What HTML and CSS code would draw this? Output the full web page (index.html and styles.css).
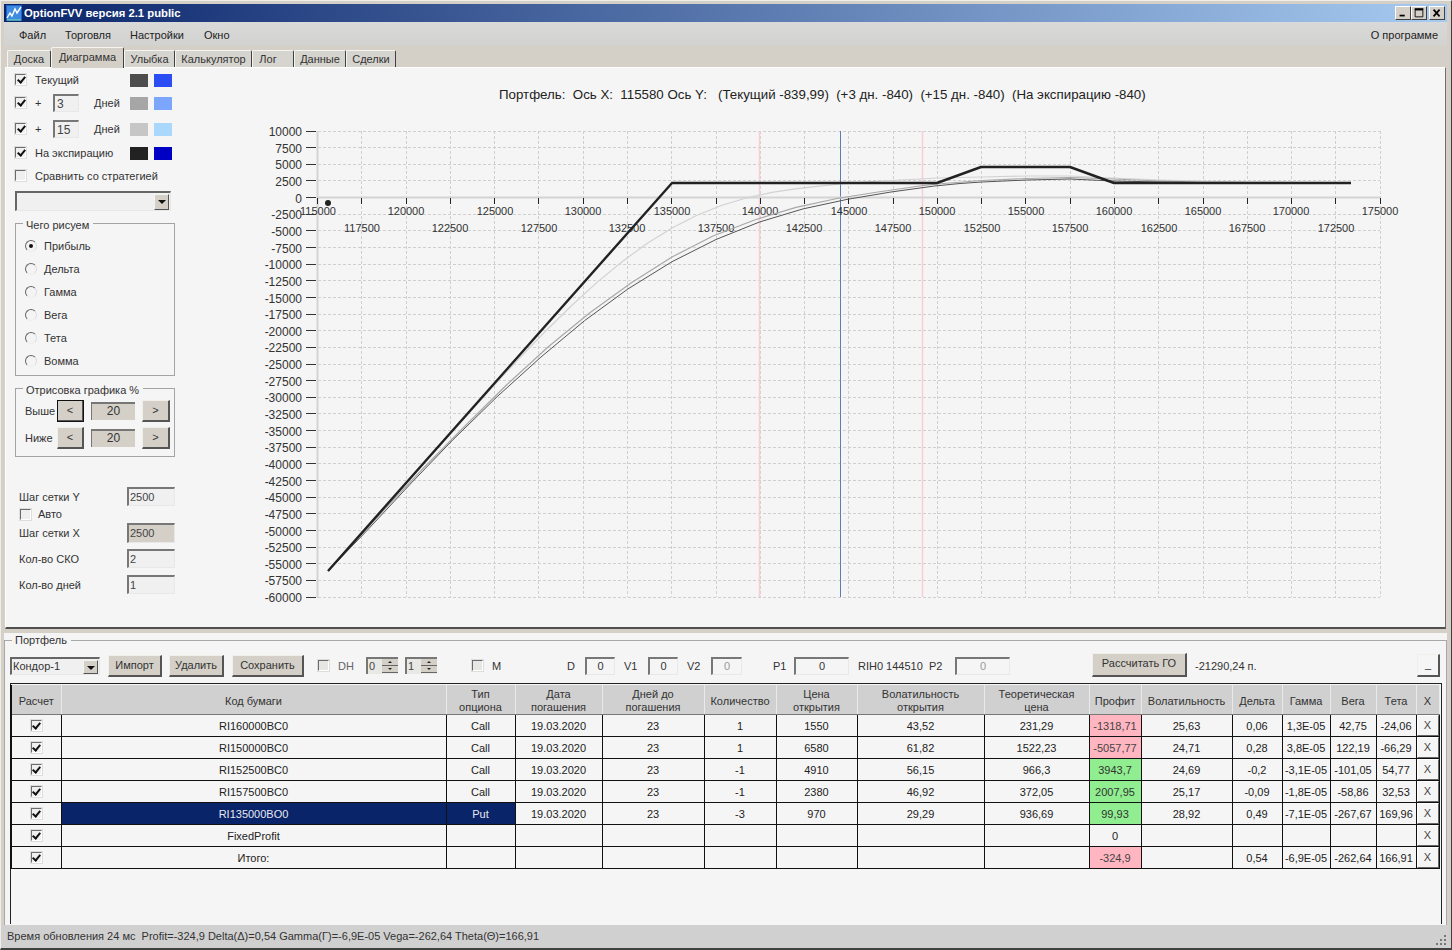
FILE: index.html
```html
<!DOCTYPE html>
<html lang="ru">
<head>
<meta charset="utf-8">
<title>OptionFVV</title>
<link rel="stylesheet" href="styles.css">
</head>
<body>
<div class="win">
  <div class="titlebar">
    <svg class="appicon" viewBox="0 0 16 16"><rect width="16" height="16" fill="#1c62c8"/><rect x="1" y="1" width="14" height="14" fill="#3f8be0"/><path d="M1 13 L4 8 L6 11 L9 4 L11 8 L15 2" fill="none" stroke="#fff" stroke-width="1.4"/><path d="M1 15 H15" stroke="#7fe0a0"/></svg>
    <span class="apptitle">OptionFVV версия 2.1 public</span>
    <div class="wbtns">
      <span class="wbtn"><svg viewBox="0 0 16 14"><rect x="4" y="9" width="6" height="2" fill="#000"/></svg></span>
      <span class="wbtn"><svg viewBox="0 0 16 14"><path d="M3.5 3.5H12.5V11.5H3.5Z M3 2.5H13" fill="none" stroke="#000"/><path d="M3 2.5H13" stroke="#000" stroke-width="2"/></svg></span>
      <span class="wbtn wbtn-close"><svg viewBox="0 0 16 14"><path d="M4 3L11 11M11 3L4 11" stroke="#000" stroke-width="2" fill="none"/></svg></span>
    </div>
  </div>
  <div class="menubar">
    <span class="menu-item m-file">Файл</span>
    <span class="menu-item m-trade">Торговля</span>
    <span class="menu-item m-set">Настройки</span>
    <span class="menu-item m-win">Окно</span>
    <span class="menu-about">О программе</span>
  </div>
  <div class="tabs">
    <span class="tab t1">Доска</span>
    <span class="tab tab-active t2">Диаграмма</span>
    <span class="tab t3">Улыбка</span>
    <span class="tab t4">Калькулятор</span>
    <span class="tab t5">Лог</span>
    <span class="tab t6">Данные</span>
    <span class="tab t7">Сделки</span>
  </div>

  <div class="main">
    <aside class="side">
      <div class="row r-first">
        <span class="cb on"></span><span class="lab lab-w">Текущий</span>
        <span class="sw sw-a1"></span><span class="sw sw-b1"></span>
      </div>
      <div class="row r-days mt6">
        <span class="cb on"></span><span class="lab plus">+</span><span class="inp inp-day">3</span><span class="lab dn">Дней</span>
        <span class="sw sw-a2"></span><span class="sw sw-b2"></span>
      </div>
      <div class="row r-days mt8">
        <span class="cb on"></span><span class="lab plus">+</span><span class="inp inp-day">15</span><span class="lab dn">Дней</span>
        <span class="sw sw-a3"></span><span class="sw sw-b3"></span>
      </div>
      <div class="row mt7">
        <span class="cb on"></span><span class="lab lab-w">На экспирацию</span>
        <span class="sw sw-a4"></span><span class="sw sw-b4"></span>
      </div>
      <div class="row mt7">
        <span class="cb"></span><span class="lab">Сравнить со стратегией</span>
      </div>
      <div class="combo combo-side"><span class="combo-val"></span><span class="combo-btn"></span></div>

      <div class="group g-draw">
        <span class="legend">Чего рисуем</span>
        <div class="radio-row"><span class="rd on"></span>Прибыль</div>
        <div class="radio-row"><span class="rd"></span>Дельта</div>
        <div class="radio-row"><span class="rd"></span>Гамма</div>
        <div class="radio-row"><span class="rd"></span>Вега</div>
        <div class="radio-row"><span class="rd"></span>Тета</div>
        <div class="radio-row"><span class="rd"></span>Вомма</div>
      </div>

      <div class="group g-pct">
        <span class="legend">Отрисовка графика %</span>
        <div class="pct-row">
          <span class="pct-lab">Выше</span><span class="btn pct-l focus">&lt;</span><span class="pct-val">20</span><span class="btn pct-r">&gt;</span>
        </div>
        <div class="pct-row pct-row2">
          <span class="pct-lab">Ниже</span><span class="btn pct-l">&lt;</span><span class="pct-val">20</span><span class="btn pct-r">&gt;</span>
        </div>
      </div>

      <div class="fld f-y"><span class="fld-lab">Шаг сетки Y</span><span class="inp inp-f">2500</span></div>
      <div class="auto"><span class="cb"></span><span class="auto-lab">Авто</span></div>
      <div class="fld f-x"><span class="fld-lab">Шаг сетки X</span><span class="inp inp-f inp-dis">2500</span></div>
      <div class="fld f-s"><span class="fld-lab">Кол-во СКО</span><span class="inp inp-f">2</span></div>
      <div class="fld f-d"><span class="fld-lab">Кол-во дней</span><span class="inp inp-f">1</span></div>
    </aside>

    <svg class="chart" width="1256" height="560" viewBox="190 68 1256 560">
      <text class="ctitle" x="499" y="99">Портфель:  Ось X:  115580 Ось Y:   (Текущий -839,99)  (+3 дн. -840)  (+15 дн. -840)  (На экспирацию -840)</text>
      <path class="grid" d="M318 131.5H1380M318 147.5H1380M318 164.5H1380M318 180.5H1380M318 214.5H1380M318 230.5H1380M318 247.5H1380M318 264.5H1380M318 280.5H1380M318 297.5H1380M318 314.5H1380M318 330.5H1380M318 347.5H1380M318 364.5H1380M318 380.5H1380M318 397.5H1380M318 413.5H1380M318 430.5H1380M318 447.5H1380M318 463.5H1380M318 480.5H1380M318 497.5H1380M318 513.5H1380M318 530.5H1380M318 547.5H1380M318 563.5H1380M318 580.5H1380M318 597.5H1380"/>
      <path class="grid" d="M361.5 131V597M406.5 131V597M450.5 131V597M494.5 131V597M538.5 131V597M583.5 131V597M627.5 131V597M671.5 131V597M716.5 131V597M760.5 131V597M804.5 131V597M848.5 131V597M893.5 131V597M937.5 131V597M981.5 131V597M1025.5 131V597M1070.5 131V597M1114.5 131V597M1158.5 131V597M1203.5 131V597M1247.5 131V597M1291.5 131V597M1335.5 131V597M1380.5 131V597"/>
      <path class="pink" d="M759.5 131V597M922.5 131V597"/>
      <path class="blue" d="M840.5 131V597"/>
      <path class="axis" d="M317.5 131V598M317 197.5H1381"/>
      <path class="ytick" d="M306 131.5H316M306 147.5H316M306 164.5H316M306 180.5H316M306 197.5H316M306 214.5H316M306 230.5H316M306 247.5H316M306 264.5H316M306 280.5H316M306 297.5H316M306 314.5H316M306 330.5H316M306 347.5H316M306 364.5H316M306 380.5H316M306 397.5H316M306 413.5H316M306 430.5H316M306 447.5H316M306 463.5H316M306 480.5H316M306 497.5H316M306 513.5H316M306 530.5H316M306 547.5H316M306 563.5H316M306 580.5H316M306 597.5H316"/>
      <path class="xtick" d="M317.5 198V204M361.5 198V204M406.5 198V204M450.5 198V204M494.5 198V204M538.5 198V204M583.5 198V204M627.5 198V204M671.5 198V204M716.5 198V204M760.5 198V204M804.5 198V204M848.5 198V204M893.5 198V204M937.5 198V204M981.5 198V204M1025.5 198V204M1070.5 198V204M1114.5 198V204M1158.5 198V204M1203.5 198V204M1247.5 198V204M1291.5 198V204M1335.5 198V204M1380.5 198V204"/>

      <g class="ylab">
        <text x="302" y="136">10000</text><text x="302" y="153">7500</text><text x="302" y="169">5000</text><text x="302" y="186">2500</text><text x="302" y="203">0</text>
        <text x="302" y="219">-2500</text><text x="302" y="236">-5000</text><text x="302" y="253">-7500</text><text x="302" y="269">-10000</text><text x="302" y="286">-12500</text>
        <text x="302" y="303">-15000</text><text x="302" y="319">-17500</text><text x="302" y="336">-20000</text><text x="302" y="352">-22500</text><text x="302" y="369">-25000</text>
        <text x="302" y="386">-27500</text><text x="302" y="402">-30000</text><text x="302" y="419">-32500</text><text x="302" y="436">-35000</text><text x="302" y="452">-37500</text>
        <text x="302" y="469">-40000</text><text x="302" y="486">-42500</text><text x="302" y="502">-45000</text><text x="302" y="519">-47500</text><text x="302" y="536">-50000</text>
        <text x="302" y="552">-52500</text><text x="302" y="569">-55000</text><text x="302" y="585">-57500</text><text x="302" y="602">-60000</text>
      </g>
      <g class="xlab">
        <text x="318" y="215">115000</text><text x="406" y="215">120000</text><text x="495" y="215">125000</text><text x="583" y="215">130000</text><text x="672" y="215">135000</text><text x="760" y="215">140000</text><text x="849" y="215">145000</text><text x="937" y="215">150000</text><text x="1026" y="215">155000</text><text x="1114" y="215">160000</text><text x="1203" y="215">165000</text><text x="1291" y="215">170000</text><text x="1380" y="215">175000</text>
        <text x="362" y="232">117500</text><text x="450" y="232">122500</text><text x="539" y="232">127500</text><text x="627" y="232">132500</text><text x="716" y="232">137500</text><text x="804" y="232">142500</text><text x="893" y="232">147500</text><text x="982" y="232">152500</text><text x="1070" y="232">157500</text><text x="1159" y="232">162500</text><text x="1247" y="232">167500</text><text x="1336" y="232">172500</text>
      </g>

      <polyline class="c-light" points="328,571 422,465 447,437 472,409.6 497,382 522,355.5 547,329.7 572,305.2 597,282.4 622,261.7 647,243.5 672,228 697,215.3 722,205.3 747,197.8 772,192.4 797,188.7 822,185.8 840,184 880,181 920,179 937,178 982,177 1027,176 1070,176 1113,178 1160,180 1200,181 1250,182 1350,183"/>
      <polyline class="c-mid" points="328,571 383,511 424.5,467 466,425 507,384.5 548,347 589.5,313 631,283 672,257 713,236 754.5,220 796,207.4 837,198.5 878,192 919.5,186 937,184 982,180.5 1027,178.5 1070,177.5 1113,179 1160,181 1200,182 1250,182.5 1350,183"/>
      <polyline class="c-dark" points="328,571 366,531.6 409.5,484.9 453,439.7 497,396.8 541,357 584.5,320.7 628,288.9 672,261.7 716,239.5 759.5,222 803,208.9 847,199.4 891,192 934.5,186 960,183.5 982,182 1027,180 1070,179 1113,181 1160,182 1200,182.5 1250,183 1350,183"/>
      <polyline class="c-exp" points="328,571 672,183 937,183 981,167 1070,167 1114,183 1351,183"/>
      <circle class="dot" cx="328" cy="203" r="3"/>
    </svg>
  </div>

  <div class="portfolio">
    <div class="pgroup">
      <span class="legend legend-p">Портфель</span>
      <div class="toolbar">
        <div class="combo combo-port"><span class="combo-val">Кондор-1</span><span class="combo-btn"></span></div>
        <span class="btn tb-btn tb-imp">Импорт</span>
        <span class="btn tb-btn tb-del">Удалить</span>
        <span class="btn tb-btn tb-save">Сохранить</span>
        <span class="cb cb-dis tb-dh"></span><span class="tb-txt tb-dhl">DH</span>
        <span class="spin tb-s1"><span class="spin-val">0</span><span class="spin-btns"><span class="spin-up"></span><span class="spin-dn"></span></span></span>
        <span class="spin tb-s2"><span class="spin-val">1</span><span class="spin-btns"><span class="spin-up"></span><span class="spin-dn"></span></span></span>
        <span class="cb cb-dis tb-m"></span><span class="tb-txt tb-ml">M</span>
        <span class="tb-txt tb-d">D</span><span class="inp tb-inp tb-i1">0</span>
        <span class="tb-txt tb-v1">V1</span><span class="inp tb-inp tb-i2">0</span>
        <span class="tb-txt tb-v2">V2</span><span class="inp tb-inp tb-i3 tb-off">0</span>
        <span class="tb-txt tb-p1">P1</span><span class="inp tb-inp tb-i4">0</span>
        <span class="tb-txt tb-ric">RIH0 144510</span><span class="tb-txt tb-p2">P2</span><span class="inp tb-inp tb-i5 tb-off">0</span>
        <span class="btn tb-btn tb-go">Рассчитать ГО</span>
        <span class="tb-txt tb-res">-21290,24 п.</span>
        <span class="btn tb-min">_</span>
      </div>
      <div class="gridbox">
        <table class="tbl">
          <colgroup>
            <col class="c1"><col class="c2"><col class="c3"><col class="c4"><col class="c5"><col class="c6"><col class="c7"><col class="c8"><col class="c9"><col class="c10"><col class="c11"><col class="c12"><col class="c13"><col class="c14"><col class="c15"><col class="c16">
          </colgroup>
          <thead>
            <tr><th>Расчет</th><th>Код бумаги</th><th>Тип<br>опциона</th><th>Дата<br>погашения</th><th>Дней до<br>погашения</th><th>Количество</th><th>Цена<br>открытия</th><th>Волатильность<br>открытия</th><th>Теоретическая<br>цена</th><th>Профит</th><th>Волатильность</th><th>Дельта</th><th>Гамма</th><th>Вега</th><th>Тета</th><th>X</th></tr>
          </thead>
          <tbody>
            <tr><td><span class="cb on cb-c"></span></td><td>RI160000BC0</td><td>Call</td><td>19.03.2020</td><td>23</td><td>1</td><td>1550</td><td>43,52</td><td>231,29</td><td class="neg">-1318,71</td><td>25,63</td><td>0,06</td><td>1,3E-05</td><td>42,75</td><td>-24,06</td><td class="xcell"><span class="xbtn">X</span></td></tr>
            <tr><td><span class="cb on cb-c"></span></td><td>RI150000BC0</td><td>Call</td><td>19.03.2020</td><td>23</td><td>1</td><td>6580</td><td>61,82</td><td>1522,23</td><td class="neg">-5057,77</td><td>24,71</td><td>0,28</td><td>3,8E-05</td><td>122,19</td><td>-66,29</td><td class="xcell"><span class="xbtn">X</span></td></tr>
            <tr><td><span class="cb on cb-c"></span></td><td>RI152500BC0</td><td>Call</td><td>19.03.2020</td><td>23</td><td>-1</td><td>4910</td><td>56,15</td><td>966,3</td><td class="pos">3943,7</td><td>24,69</td><td>-0,2</td><td>-3,1E-05</td><td>-101,05</td><td>54,77</td><td class="xcell"><span class="xbtn">X</span></td></tr>
            <tr><td><span class="cb on cb-c"></span></td><td>RI157500BC0</td><td>Call</td><td>19.03.2020</td><td>23</td><td>-1</td><td>2380</td><td>46,92</td><td>372,05</td><td class="pos">2007,95</td><td>25,17</td><td>-0,09</td><td>-1,8E-05</td><td>-58,86</td><td>32,53</td><td class="xcell"><span class="xbtn">X</span></td></tr>
            <tr><td><span class="cb on cb-c"></span></td><td class="sel">RI135000BO0</td><td class="sel">Put</td><td>19.03.2020</td><td>23</td><td>-3</td><td>970</td><td>29,29</td><td>936,69</td><td class="pos">99,93</td><td>28,92</td><td>0,49</td><td>-7,1E-05</td><td>-267,67</td><td>169,96</td><td class="xcell"><span class="xbtn">X</span></td></tr>
            <tr><td><span class="cb on cb-c"></span></td><td>FixedProfit</td><td></td><td></td><td></td><td></td><td></td><td></td><td></td><td>0</td><td></td><td></td><td></td><td></td><td></td><td class="xcell"><span class="xbtn">X</span></td></tr>
            <tr><td><span class="cb on cb-c"></span></td><td>Итого:</td><td></td><td></td><td></td><td></td><td></td><td></td><td></td><td class="neg">-324,9</td><td></td><td>0,54</td><td>-6,9E-05</td><td>-262,64</td><td>166,91</td><td class="xcell"><span class="xbtn">X</span></td></tr>
          </tbody>
        </table>
      </div>
    </div>
  </div>

  <div class="status">
    <span>Время обновления 24 мс&nbsp;&nbsp;Profit=-324,9 Delta(Δ)=0,54 Gamma(Γ)=-6,9E-05 Vega=-262,64 Theta(Θ)=166,91</span>
    <svg class="grip" viewBox="0 0 12 12"><path d="M9 1h2v2H9zM5 5h2v2H5zM9 5h2v2H9zM1 9h2v2H1zM5 9h2v2H5zM9 9h2v2H9z" fill="#777"/></svg>
  </div>
</div>
</body>
</html>
```
FILE: styles.css
```css
* { box-sizing: border-box; }
html, body { margin: 0; padding: 0; }
body { font: 11px "Liberation Sans", Arial, sans-serif; color: #222; background: #d4d0c8; }

.win {
  width: 1452px; height: 950px; padding: 4px 4px 0 3px;
  display: flex; flex-direction: column;
  background: #d4d0c8;
  border-top: 1px solid #efeee8; border-left: 1px solid #efeee8;
  border-right: 1px solid #404040; border-bottom: 2px solid #404040;
  overflow: hidden;
}

/* title bar */
.titlebar {
  height: 18px; margin-top: -1px; flex: none;
  display: flex; align-items: center;
  background: linear-gradient(90deg, #0a246a, #a6caf0);
}
.appicon { width: 16px; height: 16px; margin-left: 2px; flex: none; }
.apptitle { margin-left: 2px; color: #fff; font: bold 11.3px "Liberation Sans", Arial, sans-serif; }
.wbtns { margin-left: auto; margin-right: 2px; display: flex; }
.wbtn {
  width: 16px; height: 14px; display: block; background: #d4d0c8;
  border-top: 1px solid #fff; border-left: 1px solid #fff;
  border-right: 1px solid #404040; border-bottom: 1px solid #404040;
}
.wbtn svg { display: block; width: 14px; height: 12px; }
.wbtn-close { margin-left: 2px; }

/* menu */
.menubar {
  height: 24px; flex: none; display: flex; align-items: center; padding-top: 2px;
  background: linear-gradient(180deg, #d9d9d9, #d2d2d0);
  color: #222;
}
.m-file { margin-left: 15px; }
.m-trade { margin-left: 19px; }
.m-set { margin-left: 19px; }
.m-win { margin-left: 20px; }
.menu-about { margin-left: auto; margin-right: 9px; }

/* tabs */
.tabs { height: 21px; flex: none; display: flex; align-items: flex-end; padding-left: 3px; background: #d4d0c8; }
.tab {
  height: 17px; line-height: 16px; text-align: center; display: block;
  background: #d6d4ce; color: #333;
  border-top: 1px solid #f4f4f0; border-left: 1px solid #f4f4f0; border-right: 1px solid #404040;
  border-top-left-radius: 2px; border-top-right-radius: 2px;
}
.tab-active { height: 21px; line-height: 19px; position: relative; top: 1px; background: #d4d0c8; padding-bottom: 1px; }
.t1 { width: 44px; }
.t2 { width: 73px; }
.t3 { width: 51px; }
.t4 { width: 77px; }
.t5 { width: 42px; padding-right: 10px; }
.t6 { width: 52px; }
.t7 { width: 50px; }

/* main panel */
.main {
  height: 562px; flex: none; display: flex; margin-left: 1px; margin-right: 1px;
  background: #f5f5f5;
  border-top: 1px solid #fff; border-left: 1px solid #fff;
  border-right: 1px solid #707070; border-bottom: 2px solid #505050;
}
.side { width: 184px; flex: none; padding: 4px 0 0 9px; display: flex; flex-direction: column; }
.chart { display: block; flex: none; }

.row { display: flex; align-items: center; height: 16px; position: relative; }
.row .cb { top: -1px; }
.r-days { height: 18px; }
.mt6 { margin-top: 6px; }
.mt7 { margin-top: 7px; }
.mt8 { margin-top: 8px; }
.lab { margin-left: 9px; color: #333; }
.lab-w { width: 95px; }
.plus { width: 9px; }
.dn { margin-left: 15px; width: 36px; }
.sw { width: 18px; height: 13px; display: block; flex: none; }
.sw + .sw { margin-left: 6px; }
.sw-a1 { background: #4d4d4d; } .sw-b1 { background: #2c4cf4; }
.sw-a2 { background: #a6a6a6; } .sw-b2 { background: #7ba6fb; }
.sw-a3 { background: #c6c6c6; } .sw-b3 { background: #aad8fd; }
.sw-a4 { background: #222; }    .sw-b4 { background: #0000c4; }

/* controls */
.cb {
  width: 11px; height: 11px; display: block; flex: none; position: relative; background: #efefef;
  border-top: 1px solid #6c6c6c; border-left: 1px solid #6c6c6c;
  border-right: 1px solid #fff; border-bottom: 1px solid #fff;
  box-shadow: 0 0 0 1px #ddd;
}
.cb.on::after {
  content: ""; position: absolute; left: 2.5px; top: 0; width: 3px; height: 6px;
  border-right: 2px solid #111; border-bottom: 2px solid #111; transform: rotate(40deg);
}
.cb-dis { background: #e6e6e2; }
.cb-c { margin: 0 auto; }
.inp {
  display: block; height: 18px; line-height: 16px; padding-left: 2px; background: #f0f0f0; color: #444; flex: none;
  border-top: 2px solid #777; border-left: 2px solid #777;
  border-right: 1px solid #e8e8e8; border-bottom: 1px solid #e8e8e8;
}
.inp-day { width: 26px; margin-left: 9px; font-size: 12px; }
.btn {
  display: block; text-align: center; background: #d4d0c8; color: #333; flex: none;
  border-top: 1px solid #f0efea; border-left: 1px solid #f0efea;
  border-right: 2px solid #555; border-bottom: 2px solid #555;
}
.combo { display: flex; background: #f0f0f0; flex: none; border-top: 2px solid #666; border-left: 2px solid #666; border-right: 1px solid #e8e8e8; border-bottom: 1px solid #e8e8e8; }
.combo-side { width: 156px; height: 20px; margin: 7px 0 0 0; }
.combo-val { flex: 1; line-height: 15px; padding-left: 1px; color: #333; }
.combo-btn {
  width: 15px; margin: 1px 1px 0 0; background: #d4d0c8; position: relative;
  border-top: 1px solid #f4f4f0; border-left: 1px solid #f4f4f0; border-right: 1px solid #555; border-bottom: 1px solid #555;
}
.combo-btn::after {
  content: ""; position: absolute; left: 3px; top: 5px;
  border-left: 4px solid transparent; border-right: 4px solid transparent; border-top: 4px solid #111;
}

.group { position: relative; width: 160px; border: 1px solid #a4a4a4; }
.legend { position: absolute; left: 7px; top: -5px; height: 14px; line-height: 13px; padding: 0 4px 0 3px; background: #f5f5f5; color: #333; white-space: nowrap; }
.g-draw { height: 153px; margin-top: 12px; padding: 10px 0 0 9px; }
.radio-row { height: 23px; display: flex; align-items: center; color: #333; }
.rd {
  width: 12px; height: 12px; border-radius: 50%; margin-right: 7px; position: relative; background: #f4f4f4; flex: none;
  border: 1px solid; border-color: #666 #ddd #eee #666;
}
.rd.on::after { content: ""; position: absolute; left: 3px; top: 3px; width: 4px; height: 4px; border-radius: 50%; background: #111; }
.g-pct { height: 69px; margin-top: 12px; padding: 11px 0 0 9px; }
.pct-row { display: flex; align-items: center; height: 22px; }
.pct-row2 { margin-top: 5px; }
.pct-lab { width: 32px; color: #333; }
.pct-l, .pct-r { height: 22px; line-height: 19px; }
.pct-l { width: 27px; }
.pct-r { width: 28px; }
.focus { outline: 1px solid #111; outline-offset: -1px; }
.pct-val {
  width: 44px; height: 18px; margin: 0 7px; line-height: 15px; text-align: center; background: #d4d0c8; font-size: 12px; color: #333;
  border-top: 2px solid #777; border-left: 1px solid #777;
}
.fld { display: flex; align-items: center; justify-content: space-between; width: 156px; margin-left: 4px; }
.fld-lab { color: #333; }
.inp-f { width: 48px; height: 19px; padding-left: 1px; }
.inp-dis { background: #d4d0c8; height: 20px; }
.f-y { margin-top: 30px; }
.auto { display: flex; align-items: center; height: 12px; margin: 2px 0 0 5px; }
.auto-lab { margin-left: 7px; color: #333; }
.f-x { margin-top: 3px; }
.f-s { margin-top: 6px; }
.f-d { margin-top: 7px; }

/* chart */
.ctitle { font: 13.3px "Liberation Sans", Arial, sans-serif; fill: #222; white-space: pre; }
.grid { fill: none; stroke: #cfcfcf; stroke-width: 1; stroke-dasharray: 3 2; }
.pink { fill: none; stroke: #f9cdd6; stroke-width: 1.5; }
.blue { fill: none; stroke: #5f7cae; stroke-width: 1; }
.axis { fill: none; stroke: #d4d4d4; stroke-width: 2; }
.ytick { fill: none; stroke: #333; stroke-width: 1; }
.xtick { fill: none; stroke: #222; stroke-width: 1; }
.ylab text { font: 12px "Liberation Sans", Arial, sans-serif; fill: #333; text-anchor: end; }
.xlab text { font: 11px "Liberation Sans", Arial, sans-serif; fill: #333; text-anchor: middle; }
.c-light, .c-mid, .c-dark, .c-exp { fill: none; stroke-linejoin: round; }
.c-light { stroke: #d2d2d2; stroke-width: 1.2; }
.c-mid { stroke: #a8a8a8; stroke-width: 1.2; }
.c-dark { stroke: #555; stroke-width: 1; }
.c-exp { stroke: #222; stroke-width: 2.4; }
.dot { fill: #222; }

/* portfolio */
.portfolio { height: 292px; flex: none; padding-top: 7px; margin-top: 4px; background: #f5f5f5; }
.pgroup {
  height: 100%; position: relative; padding-left: 5px;
  border-top: 1px solid #a8a8a8; border-left: 1px solid #a8a8a8; border-right: 1px solid #a8a8a8;
  display: flex; flex-direction: column;
}
.legend-p { left: 7px; top: -7px; background: #f5f5f5; }
.toolbar { height: 42px; padding-top: 7px; flex: none; display: flex; align-items: center; position: relative; }
.combo-port { width: 90px; height: 18px; }
.tb-btn { height: 22px; line-height: 19px; }
.tb-imp { width: 54px; margin-left: 8px; }
.tb-del { width: 55px; margin-left: 7px; }
.tb-save { width: 72px; margin-left: 8px; }
.tb-dh { margin-left: 14px; }
.tb-txt { color: #333; flex: none; white-space: nowrap; }
.tb-dhl { margin-left: 9px; width: 20px; color: #666; }
.spin { display: flex; width: 32px; height: 17px; margin-left: 8px; background: #e8e8e4; border-top: 2px solid #777; border-left: 2px solid #777; flex: none; }
.tb-s2 { margin-left: 7px; }
.spin-val { width: 14px; line-height: 14px; padding-left: 1px; color: #444; }
.spin-btns { display: flex; flex-direction: column; width: 16px; }
.spin-up, .spin-dn { display: block; height: 7px; position: relative; background: #d4d0c8; border-bottom: 1px solid #666; }
.spin-up::after, .spin-dn::after { content: ""; position: absolute; left: 6px; top: 2px; border-left: 2px solid transparent; border-right: 2px solid transparent; }
.spin-up::after { border-bottom: 2px solid #222; }
.spin-dn::after { border-top: 2px solid #222; }
.tb-m { margin-left: 35px; }
.tb-ml { margin-left: 9px; width: 11px; }
.tb-d { margin-left: 64px; width: 8px; }
.tb-inp { height: 18px; text-align: center; line-height: 15px; padding: 0; background: #f5f5f5; color: #333; }
.tb-i1 { width: 30px; margin-left: 10px; }
.tb-v1 { margin-left: 9px; width: 14px; }
.tb-i2 { width: 30px; margin-left: 10px; }
.tb-v2 { margin-left: 9px; width: 14px; }
.tb-i3 { width: 31px; margin-left: 10px; }
.tb-off { color: #999; }
.tb-p1 { margin-left: 31px; width: 13px; }
.tb-i4 { width: 55px; margin-left: 8px; }
.tb-ric { margin-left: 9px; width: 65px; }
.tb-p2 { margin-left: 6px; width: 14px; }
.tb-i5 { width: 55px; margin-left: 12px; }
.tb-go { width: 95px; height: 24px; margin-left: 82px; position: relative; top: -1px; }
.tb-res { margin-left: 8px; width: 60px; }
.tb-min { width: 23px; height: 23px; margin-left: 162px; line-height: 19px; background: #f5f5f5; }

.gridbox {
  width: 1432px; height: 241px; flex: none; padding-top: 1px; background: #f5f5f5;
  border-top: 1px solid #222; border-left: 1px solid #222; border-right: 1px solid #222;
  position: relative;
}
.tbl { border-collapse: collapse; table-layout: fixed; width: 1428px; margin-left: -1px; border-left: 2px solid #111; }
.c1 { width: 50px; } .c2 { width: 385px; } .c3 { width: 69px; } .c4 { width: 87px; }
.c5 { width: 102px; } .c6 { width: 72px; } .c7 { width: 81px; } .c8 { width: 127px; }
.c9 { width: 105px; } .c10 { width: 52px; } .c11 { width: 91px; } .c12 { width: 50px; }
.c13 { width: 48px; } .c14 { width: 46px; } .c15 { width: 40px; } .c16 { width: 23px; }
.tbl th {
  height: 29px; padding: 3px 0 0; font-weight: normal; line-height: 13px; text-align: center; color: #333; background: #d0d0d0;
  border-right: 1px solid #eaeaea; border-bottom: 1px solid #777;
}
.tbl td {
  height: 22px; padding: 0; text-align: center; color: #222;
  border-right: 1px solid #111; border-bottom: 1px solid #111;
  white-space: nowrap; overflow: hidden;
}
.tbl .neg { background: #ffb6c1; color: #444; }
.tbl .pos { background: #90ee90; color: #333; }
.tbl .sel { background: #0a246a; color: #e8e8f0; }
.tbl .xcell { border-right: 1px solid #111; padding: 0; }
.xbtn {
  display: block; width: 22px; height: 21px; line-height: 19px; margin: 0 auto; color: #444; background: #f5f5f5;
  border-top: 1px solid #fff; border-left: 1px solid #fff; border-right: 1px solid #666; border-bottom: 1px solid #666;
}

/* status */
.status {
  height: 23px; flex: none; margin: 0 -3px 0 -3px; padding: 0 3px 2px 6px;
  display: flex; align-items: center; justify-content: space-between;
  background: #d0d0d0; color: #333; font-size: 11px;
}
.grip { width: 12px; height: 12px; margin-top: 8px; }
```
